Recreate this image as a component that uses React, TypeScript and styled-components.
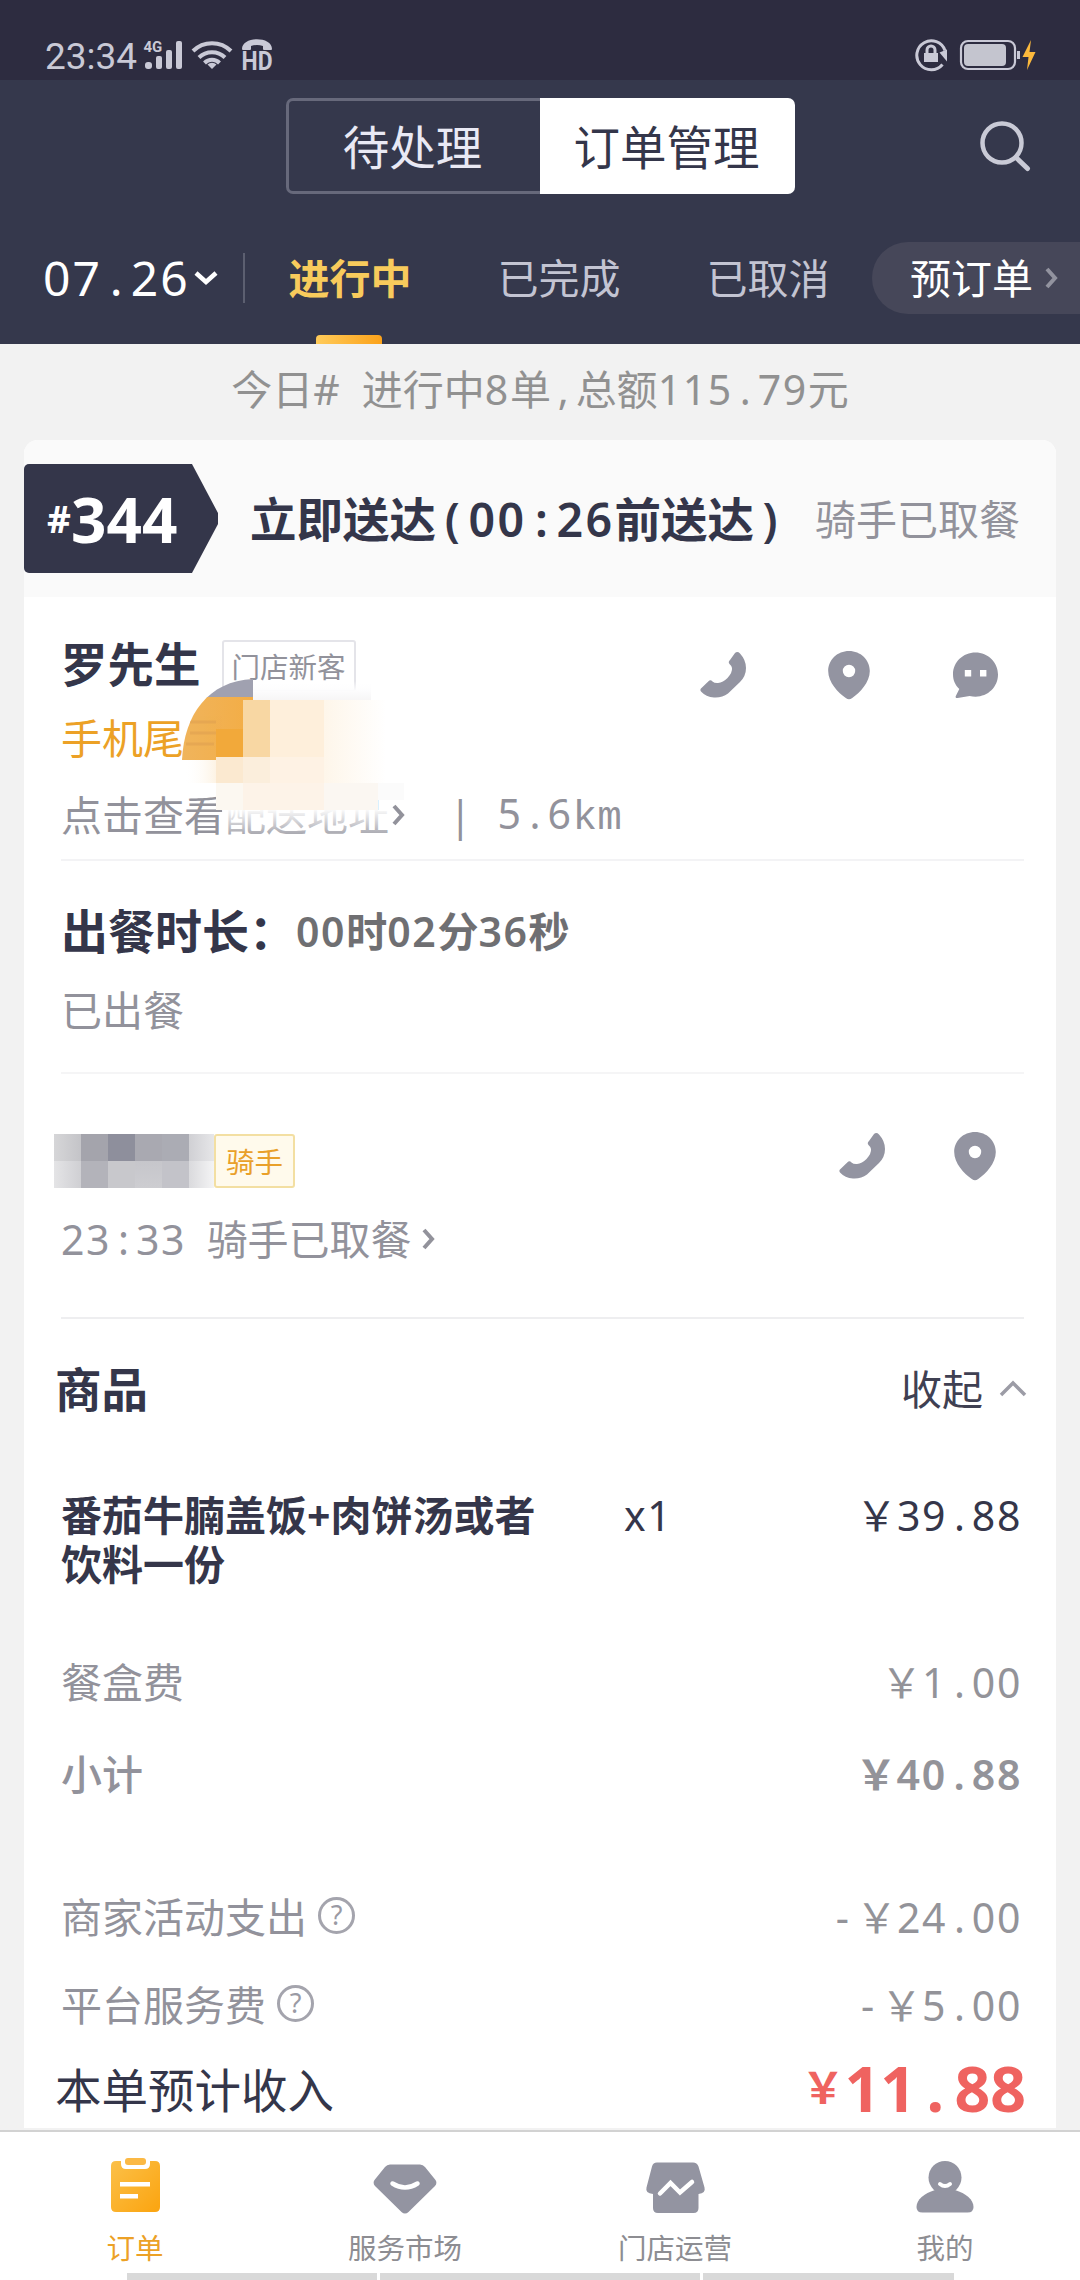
import React from "react";
import styled, { createGlobalStyle, css } from "styled-components";

const GlobalStyle = createGlobalStyle`
  * { box-sizing: border-box; }
  body { margin: 0; background: #f2f2f2; }
`;

const ink = "#34364a";
const gray = "#92929b";
const iconGray = "#9394a1";
const amber = "#eca126";

const Screen = styled.div`
  width: 1080px;
  height: 2280px;
  display: flex;
  flex-direction: column;
  overflow: hidden;
  background: #f2f2f2;
  color: ${ink};
  font-family: "Noto Sans", "Noto Sans CJK SC", sans-serif;
  font-size: 41px;
  line-height: 50px;
  white-space: nowrap;
`;

/* ---------- text ---------- */

const Digits = styled.span<{ $loose?: boolean }>`
  letter-spacing: ${(p) => (p.$loose ? 0.05 : 0.04)}em;
  word-spacing: 0.2em;
  white-space: pre;
`;
const Mark = styled.span<{ $loose?: boolean }>`
  letter-spacing: 0;
  padding: 0 ${(p) => (p.$loose ? 0.187 : 0.168)}em;
`;
const Wide = styled.span`
  letter-spacing: 0;
`;
const Unit = styled.span`
  font-family: "Liberation Mono", monospace;
  letter-spacing: 0;
`;

function Mono({ children, loose }: { children: string; loose?: boolean }) {
  const parts = children.split(/([.:,()-]|km|[^\x00-\x7f]+)/).filter(Boolean);
  return (
    <Digits $loose={loose}>
      {parts.map((p, i) =>
        /^[.:,()-]$/.test(p) ? (
          <Mark key={i} $loose={loose}>{p}</Mark>
        ) : p === "km" ? (
          <Unit key={i}>{p}</Unit>
        ) : /^[^\x00-\x7f]/.test(p) ? (
          <Wide key={i}>{p}</Wide>
        ) : (
          p
        )
      )}
    </Digits>
  );
}

type TextProps = {
  $size?: number;
  $color?: string;
  $weight?: number;
};
const Text = styled.span<TextProps>`
  font-size: ${(p) => p.$size ?? 41}px;
  color: ${(p) => p.$color ?? gray};
  font-weight: ${(p) => p.$weight ?? 400};
`;

/* ---------- status bar ---------- */

const StatusBar = styled.header`
  height: 80px;
  flex: none;
  display: flex;
  align-items: flex-start;
  justify-content: space-between;
  padding: 38px 44px 0 45px;
  background: #2d2c40;
  color: #c9c9d6;
`;
const StatusGroup = styled.div`
  display: flex;
  align-items: center;
  height: 34px;
`;
const Clock = styled.span`
  width: 98px;
  padding-top: 4px;
  font-family: Roboto, sans-serif;
  font-size: 37px;
  line-height: 34px;
`;
const StatusSvg = styled.svg`
  display: block;
  flex: none;
`;

/* ---------- header ---------- */

const Header = styled.div`
  height: 264px;
  flex: none;
  background: #35384c;
`;
const TitleBar = styled.div`
  height: 132px;
  display: grid;
  grid-template-columns: 286px 509px 1fr;
  align-items: start;
  padding-top: 18px;
`;
const Segments = styled.div`
  grid-column: 2;
  display: grid;
  grid-template-columns: 254px 255px;
  height: 96px;
`;
const Segment = styled.button<{ $active?: boolean }>`
  padding: 1px 4px 0 0;
  font: inherit;
  font-size: 46.5px;
  border: 3px solid #67697b;
  border-right: 0;
  border-radius: 7px 0 0 7px;
  background: transparent;
  color: #e9e9f4;
  ${(p) =>
    p.$active &&
    css`
      padding-right: 2px;
      border: 0;
      border-radius: 0 7px 7px 0;
      background: #fff;
      color: ${ink};
    `}
`;
const SearchButton = styled.div`
  padding: 20px 0 0 182px;
`;
const TabBar = styled.div`
  height: 132px;
  display: flex;
  align-items: center;
  padding-left: 43px;
`;
const DatePicker = styled.div`
  display: flex;
  align-items: center;
  width: 200px;
  color: #fff;
  font-size: 48px;
`;
const TabDivider = styled.div`
  width: 2px;
  height: 50px;
  margin-right: 23px;
  background: #5c5f70;
`;
const Tab = styled.div<{ $active?: boolean }>`
  position: relative;
  width: 164px;
  height: 132px;
  margin-right: 45px;
  text-align: center;
  line-height: 132px;
  color: ${(p) => (p.$active ? "#f8cb5c" : "#c3c4d2")};
  font-weight: ${(p) => (p.$active ? 700 : 400)};
  &:nth-last-child(2) {
    margin-right: 22px;
  }
`;
const TabMark = styled.i`
  position: absolute;
  left: 48px;
  bottom: 0;
  width: 66px;
  height: 9px;
  border-radius: 4px 4px 0 0;
  background: linear-gradient(90deg, #ffcb5a, #fba21b);
`;
const Preorder = styled.div`
  flex: 1;
  display: flex;
  align-items: center;
  gap: 12px;
  height: 72px;
  padding-left: 38px;
  border-radius: 36px 0 0 36px;
  background: #464759;
  color: #fff;
`;

/* ---------- order card ---------- */

const Summary = styled.div`
  height: 96px;
  flex: none;
  line-height: 90px;
  text-align: center;
  color: #919191;
`;
const Card = styled.section`
  height: 1688px;
  flex: none;
  margin: 0 24px;
  border-radius: 14px 14px 0 0;
  background: #fff;
`;
const CardHead = styled.div`
  height: 157px;
  display: flex;
  align-items: center;
  border-radius: 14px 14px 0 0;
  background: #fafafa;
`;
const OrderNo = styled.div`
  display: flex;
  align-items: center;
  width: 194px;
  height: 109px;
  padding-left: 23px;
  background: ${ink};
  border-radius: 5px 0 0 5px;
  clip-path: polygon(0 0, 168px 0, 194px 45%, 194px 55%, 168px 100%, 0 100%);
  color: #fff;
  font-weight: 700;
  font-size: 62px;
`;
const Hash = styled.span`
  width: 24px;
  font-size: 37px;
`;
const Deadline = styled.div`
  width: 567px;
  padding-left: 32px;
  font-size: 46.5px;
  font-weight: 600;
`;

const Section = styled.div<{ $bottom: number; $line: string }>`
  margin: 0 32px 0 37px;
  padding-bottom: ${(p) => p.$bottom}px;
  border-bottom: 2px solid ${(p) => p.$line};
  position: relative;
`;
const Goods = styled.div`
  margin: 0 29px 0 37px;
`;
const Row = styled.div<{ $top: number; $h?: number; $outdent?: number }>`
  display: flex;
  align-items: center;
  height: ${(p) => p.$h ?? 50}px;
  margin: ${(p) => p.$top}px 0 0 ${(p) => -(p.$outdent ?? 0)}px;
`;
const Spacer = styled.div<{ $w?: number }>`
  ${(p) => (p.$w ? `width: ${p.$w}px; flex: none;` : "flex: 1;")}
`;
const Flow = styled.div`
  display: flow-root;
`;
const Tag = styled.span<{ $gold?: boolean }>`
  display: flex;
  align-items: center;
  justify-content: center;
  font-size: 28.5px;
  margin-top: ${(p) => (p.$gold ? 0 : 4)}px;
  padding-top: 2px;
  width: ${(p) => (p.$gold ? 81 : 134)}px;
  height: ${(p) => (p.$gold ? 54 : 52)}px;
  border: 2px solid ${(p) => (p.$gold ? "#f3dfa2" : "#e4e4e9")};
  border-radius: 3px;
  background: ${(p) => (p.$gold ? "#fffaec" : "#fff")};
  color: ${(p) => (p.$gold ? "#e9a02a" : gray)};
`;
const Actions = styled.div<{ $gap: number; $right: number; $top?: number; $bottom?: number }>`
  display: flex;
  align-items: center;
  margin-left: auto;
  gap: ${(p) => p.$gap}px;
  padding: ${(p) => p.$top ?? 0}px ${(p) => p.$right}px ${(p) => p.$bottom ?? 0}px 0;
`;
const Smudge = styled.svg`
  position: absolute;
  left: 115px;
  top: 73px;
  pointer-events: none;
`;
const ItemRow = styled.div`
  display: grid;
  grid-template-columns: 563px 1fr auto;
  align-items: start;
  margin-top: 77px;
  padding-right: 5px;
  line-height: 49px;
  color: #35364a;
`;
const ItemName = styled.div`
  width: 490px;
  font-weight: 700;
  white-space: normal;
`;
const Amount = styled.span<{ $weight?: number }>`
  margin-left: auto;
  padding-right: 5px;
  color: #939399;
  font-weight: ${(p) => p.$weight ?? 400};
`;
const Total = styled.div`
  margin-left: auto;
  display: flex;
  align-items: center;
  padding: 0 1px 5px 0;
  font-size: 62.5px;
  font-weight: 700;
  line-height: 60px;
  color: #ef6360;
`;
const Currency = styled.span`
  font-size: 43px;
`;

/* ---------- bottom navigation ---------- */

const Nav = styled.nav`
  margin-top: 2px;
  height: 150px;
  flex: none;
  display: flex;
  flex-direction: column;
  border-top: 2px solid #d2d2d2;
  background: #fff;
`;
const NavItems = styled.div`
  display: grid;
  grid-template-columns: repeat(4, 270px);
  height: 141px;
`;
const NavItem = styled.div<{ $active?: boolean }>`
  display: flex;
  flex-direction: column;
  align-items: center;
  padding-top: 22px;
  font-size: 28.5px;
  line-height: 32px;
  color: ${(p) => (p.$active ? amber : "#8d8d92")};
  svg {
    margin-bottom: 18px;
  }
`;
const Handle = styled.div`
  display: grid;
  grid-template-columns: 250px 320px 251px;
  gap: 3px;
  margin-left: 127px;
  height: 7px;
`;
const HandlePart = styled.i`
  background: #d9d9d9;
`;

/* ---------- icons ---------- */

const Phone = () => (
  <svg width="48" height="48" viewBox="-1 0 48 48" fill={iconGray}>
    <path d="M35 2Q37.500 0 40 2.500 46 9 46 17 46 25 40 31L28 42.500Q22 47 14 46.500 6 46 1 40.500 -.5 38.500 1.500 37L8.500 30.200Q10.500 28.300 12.500 30.500 14.500 32.300 18 32 23 31.500 27.500 27 32.500 21.500 32 17 31.800 15 29.500 13 27.800 11 30 9Z" />
  </svg>
);
const Pin = () => (
  <svg width="44" height="50" viewBox="0 0 44 50" fill={iconGray}>
    <path
      fillRule="evenodd"
      d="M22 1C10.400 1 1.200 9.800 1.200 21c0 11.500 10 21.700 17.600 27 2.200 1.600 4.200 1.600 6.400 0C32.800 42.700 42.800 32.500 42.800 21 42.800 9.800 33.600 1 22 1zm0 13.800a6.200 6.200 0 1 1 0 12.400 6.200 6.200 0 0 1 0-12.400z"
    />
  </svg>
);
const Chat = () => (
  <svg width="48" height="48" viewBox="0 0 48 48" fill={iconGray}>
    <path
      fillRule="evenodd"
      d="M24.500 1.500C12 1.500 2 11 2 23.200c0 6.200 2.300 11 6.300 14.800L4.800 45c-.7 1.500.3 2.300 1.800 2l12-2c2 .5 4 .7 6 .7C37 45.700 47 36 47 23.600S37 1.500 24.500 1.500zM13.800 19h6.400v6.400h-6.400zm15.200 0h6.400v6.400H29z"
    />
  </svg>
);
type ChevronProps = { w: number; h: number; d: string; color: string; sw?: number };
const Chevron = ({ w, h, d, color, sw = 4 }: ChevronProps) => (
  <svg width={w} height={h} viewBox={`0 0 ${w} ${h}`} fill="none" stroke={color} strokeWidth={sw}>
    <path d={d} />
  </svg>
);
const HelpMark = styled.span`
  display: flex;
  align-items: center;
  justify-content: center;
  width: 37px;
  height: 37px;
  margin: 0 0 4px 11px;
  border: 3px solid #a4a4ad;
  border-radius: 50%;
  font-size: 27px;
  line-height: 30px;
  color: #9a9aa4;
`;

const NameMosaic = () => (
  <Smudge width="240" height="170" viewBox="176 670 240 170">
    <defs>
      <linearGradient id="mFade" x1="0" x2="0" y1="0" y2="1">
        <stop offset="0" stopColor="#fff" stopOpacity=".95" />
        <stop offset="1" stopColor="#fff" stopOpacity=".1" />
      </linearGradient>
      <linearGradient id="mRight" x1="0" x2="1" y1="0" y2="0">
        <stop offset="0" stopColor="#fef6ea" />
        <stop offset="1" stopColor="#fff" />
      </linearGradient>
      <linearGradient id="mOrange" x1="0" x2="1" y1="0" y2="0">
        <stop offset="0" stopColor="#f0b45c" />
        <stop offset="1" stopColor="#f3ad45" />
      </linearGradient>
      <linearGradient id="mTag" x1="0" x2="0" y1="0" y2="1">
        <stop offset="0" stopColor="#fff" stopOpacity="0" />
        <stop offset=".5" stopColor="#fcfcfd" />
        <stop offset="1" stopColor="#f6f5f5" />
      </linearGradient>
      <linearGradient id="mLow" x1="0" x2="1" y1="0" y2="0">
        <stop offset="0" stopColor="#fff" stopOpacity="0" />
        <stop offset="1" stopColor="#fdf3e4" />
      </linearGradient>
      <clipPath id="mDome">
        <path d="M182 760C184 715 208 681 253 679V760z" />
      </clipPath>
    </defs>
    <g clipPath="url(#mDome)">
      <rect x="182" y="678" width="71" height="20" fill="#a0a1b0" />
      <rect x="182" y="697" width="71" height="63" fill="url(#mOrange)" />
      <path d="M190 722h26M190 733h26M186 744h28" stroke="#e0a050" strokeWidth="3" opacity=".6" />
    </g>
    <rect x="253" y="681" width="118" height="20" fill="url(#mTag)" />
    <rect x="216" y="729" width="27" height="30" fill="#f2a93a" />
    <rect x="243" y="700" width="27" height="57" fill="#f8d7a3" />
    <rect x="270" y="700" width="54" height="57" fill="#feefdb" />
    <rect x="324" y="700" width="62" height="57" fill="url(#mRight)" />
    <rect x="184" y="760" width="32" height="23" fill="url(#mLow)" />
    <rect x="216" y="757" width="27" height="26" fill="#fbe9d0" />
    <rect x="243" y="757" width="27" height="26" fill="#fbeedc" />
    <rect x="270" y="757" width="54" height="26" fill="#fef2e4" />
    <rect x="324" y="757" width="62" height="26" fill="url(#mRight)" />
    <rect x="216" y="783" width="27" height="27" fill="#fcf8f1" />
    <rect x="243" y="783" width="81" height="27" fill="#fdf3e8" />
    <rect x="324" y="783" width="54" height="27" fill="#fbf7f2" />
    <rect x="378" y="783" width="26" height="17" fill="#fbfbfb" />
    <rect x="222" y="810" width="168" height="28" fill="url(#mFade)" />
  </Smudge>
);

const RiderMosaic = styled.div`
  display: grid;
  grid-template-columns: repeat(6, 27px);
  grid-template-rows: 27px 27px;
  width: 160px;
  overflow: hidden;
`;
const Cell = styled.i<{ $c: string }>`
  background: ${(p) => p.$c};
`;
const riderCells = [
  "linear-gradient(90deg,#d6d6d8,#c4c4c8)",
  "#a4a4ac",
  "#8e8f9c",
  "#a9a9b1",
  "#abacb4",
  "linear-gradient(90deg,#d0d0d4,#e8e8ea)",
  "linear-gradient(90deg,#e4e4e6,#cfcfd3)",
  "#b3b3ba",
  "#c8c8cc",
  "linear-gradient(180deg,#c6c6cb,#cdcdd1)",
  "#c3c3c9",
  "linear-gradient(90deg,#dadadd,#f6f6f7)",
];

export default function App() {
  return (
    <Screen>
      <GlobalStyle />
      <StatusBar>
        <StatusGroup>
          <Clock>23:34</Clock>
          <StatusSvg width="140" height="50" viewBox="143 30 140 50" fill="#c9c9d6">
            <text x="143.500" y="52" fontFamily="Roboto" fontWeight="700" fontSize="15">4G</text>
            <rect x="145" y="62" width="7" height="7" rx="3" />
            <rect x="156" y="56" width="6" height="13" rx="2" />
            <rect x="166" y="50" width="6" height="19" rx="2" />
            <rect x="176" y="41" width="6" height="28" rx="2" />
            <g fill="none" stroke="#c9c9d6" strokeWidth="4">
              <path d="M193 51a27 27 0 0 1 38 0" />
              <path d="M199 57.500a18.500 18.500 0 0 1 26 0" />
              <path d="M204.500 63a10.500 10.500 0 0 1 15 0" />
            </g>
            <path d="M212 69l-4.500-4.500a6.500 6.500 0 0 1 9 0z" />
            <path d="M242 49c0-13 30-13 30 0q0 1-1 1h-7q-1 0-1-1v-3q-6-2-12 0v3q0 1-1 1h-7q-1 0-1-1z" />
            <text x="241.500" y="70" fontFamily="Roboto" fontWeight="700" fontSize="26" textLength="31" lengthAdjust="spacingAndGlyphs">HD</text>
          </StatusSvg>
        </StatusGroup>
        <StatusGroup>
          <StatusSvg width="122" height="34" viewBox="914 38 122 34" fill="none">
            <path d="M942.500 64.500a14.500 14.500 0 1 1 2.500-14" stroke="#c9c9d6" strokeWidth="3" />
            <path d="M939.500 52.500l7.500 9v-12z" fill="#c9c9d6" />
            <rect x="924" y="53" width="14" height="9" fill="#c9c9d6" />
            <path d="M927 54v-4a4 4 0 0 1 8 0v4" stroke="#c9c9d6" strokeWidth="3" />
            <rect x="961" y="41" width="54" height="28" rx="7" stroke="#c9c9d6" strokeWidth="2.200" />
            <rect x="964" y="44" width="42" height="22" rx="4" fill="#c4c5cf" />
            <rect x="1017" y="51" width="3" height="8" fill="#c9c9d6" />
            <path d="M1031 40l-8.500 17h6l-1.500 13 8.500-18h-6z" fill="#fcb93c" />
          </StatusSvg>
        </StatusGroup>
      </StatusBar>

      <Header>
        <TitleBar>
          <Segments>
            <Segment>待处理</Segment>
            <Segment $active>订单管理</Segment>
          </Segments>
          <SearchButton>
            <svg width="56" height="56" viewBox="0 0 56 56" fill="none" stroke="#c9cad6" strokeWidth="4.500">
              <circle cx="25" cy="25" r="19.500" />
              <path d="M39 39.500l11.500 11" strokeWidth="5" strokeLinecap="round" />
            </svg>
          </SearchButton>
        </TitleBar>
        <TabBar>
          <DatePicker>
            <Mono>07.26</Mono>
            <Spacer $w={3} />
            <Chevron w={26} h={18} d="M3 4l10 9 10-9" color="#fff" sw={4.5} />
          </DatePicker>
          <TabDivider />
          <Tab $active>
            进行中
            <TabMark />
          </Tab>
          <Tab>已完成</Tab>
          <Tab>已取消</Tab>
          <Preorder>
            预订单
            <Chevron w={14} h={24} d="M2 3l8 9-8 9" color="#92939f" />
          </Preorder>
        </TabBar>
      </Header>

      <Summary>
        <Mono>今日# 进行中8单,总额115.79元</Mono>
      </Summary>

      <Card>
        <CardHead>
          <OrderNo>
            <Hash>#</Hash>344
          </OrderNo>
          <Deadline>
            <Mono loose>立即送达(00:26前送达)</Mono>
          </Deadline>
          <Spacer $w={30} />
          <Text>骑手已取餐</Text>
        </CardHead>

        <Section $bottom={19} $line="#f3f3f5">
          <Flow>
            <Row $top={39} $h={56}>
              <Text $size={46.5} $color={ink} $weight={700}>罗先生</Text>
              <Spacer $w={21} />
              <Tag>门店新客</Tag>
              <Actions $gap={80} $right={25} $top={22}>
                <Phone />
                <Pin />
                <Chat />
              </Actions>
            </Row>
            <Row $top={21}>
              <Text $color={amber}>手机尾号</Text>
            </Row>
            <Row $top={27}>
              <Text>点击查看配送地址</Text>
              <Spacer $w={3} />
              <Chevron w={14} h={22} d="M2 2l8 9-8 9" color={gray} />
              <Spacer $w={43} />
              <Text>|</Text>
              <Spacer $w={26} />
              <Text><Mono>5.6km</Mono></Text>
            </Row>
            <NameMosaic />
          </Flow>
        </Section>

        <Section $bottom={37} $line="#f5f5f6">
          <Flow>
            <Row $top={45}>
              <Text $size={47} $color={ink} $weight={700}>出餐时长{"\uFF1A"}</Text>
              <Text $color="#6f6f72" $weight={600}><Mono>00时02分36秒</Mono></Text>
            </Row>
            <Row $top={29}>
              <Text>已出餐</Text>
            </Row>
          </Flow>
        </Section>

        <Section $bottom={53} $line="#eeeef0">
          <Flow>
            <Row $top={60} $h={54} $outdent={7}>
              <RiderMosaic>
                {riderCells.map((c, i) => (
                  <Cell key={i} $c={c} />
                ))}
              </RiderMosaic>
              <Tag $gold>骑手</Tag>
              <Actions $gap={67} $right={27} $bottom={11}>
                <Phone />
                <Pin />
              </Actions>
            </Row>
            <Row $top={26}>
              <Text><Mono>23:33 骑手已取餐</Mono></Text>
              <Spacer $w={10} />
              <Chevron w={14} h={22} d="M2 2l8 9-8 9" color={gray} />
            </Row>
          </Flow>
        </Section>

        <Goods>
          <Flow>
            <Row $top={45} $outdent={6}>
              <Text $size={46.5} $color={ink} $weight={700}>商品</Text>
              <Spacer />
              <Text $color="#3f4052">收起</Text>
              <Spacer $w={16} />
              <Chevron w={28} h={18} d="M2 15l12-12 12 12" color="#9c9ca6" sw={3.5} />
            </Row>
            <ItemRow>
              <ItemName>番茄牛腩盖饭+肉饼汤或者饮料一份</ItemName>
              <Mono>x1</Mono>
              <Mono>{"\uFFE539.88"}</Mono>
            </ItemRow>
            <Row $top={68}>
              <Text>餐盒费</Text>
              <Amount><Mono>{"\uFFE51.00"}</Mono></Amount>
            </Row>
            <Row $top={42}>
              <Text $weight={500}>小计</Text>
              <Amount $weight={600}><Mono>{"\uFFE540.88"}</Mono></Amount>
            </Row>
            <Row $top={93}>
              <Text>商家活动支出</Text>
              <HelpMark>?</HelpMark>
              <Amount><Mono>{"-\uFFE524.00"}</Mono></Amount>
            </Row>
            <Row $top={38}>
              <Text>平台服务费</Text>
              <HelpMark>?</HelpMark>
              <Amount><Mono>{"-\uFFE55.00"}</Mono></Amount>
            </Row>
            <Row $top={30} $h={60} $outdent={6}>
              <Text $size={46.5} $color={ink}>本单预计收入</Text>
              <Total>
                <Currency>{"\uFFE5"}</Currency>
                <span>11<Mark>.</Mark>88</span>
              </Total>
            </Row>
          </Flow>
        </Goods>
      </Card>

      <Nav>
        <NavItems>
          <NavItem $active>
            <svg width="64" height="60" viewBox="0 0 64 60">
              <defs>
                <linearGradient id="clip" x1="0" y1="0" x2="1" y2="1">
                  <stop offset="0" stopColor="#fbc049" />
                  <stop offset="1" stopColor="#fba40f" />
                </linearGradient>
              </defs>
              <path d="M13 7h5v3q0 5 5 5h19q5 0 5-5V7h5q5 0 5 5v41q0 5-5 5H13q-5 0-5-5V12q0-5 5-5z" fill="url(#clip)" />
              <rect x="22" y="4" width="21" height="7" rx="3" fill="#fbb945" />
              <rect x="17" y="28" width="30" height="4.500" fill="#fff" />
              <rect x="17" y="40" width="18" height="4.500" fill="#fff" />
            </svg>
            订单
          </NavItem>
          <NavItem>
            <svg width="64" height="60" viewBox="0 0 64 60">
              <path d="M17 10.500h30q3 0 5 2.500l10.500 13q2 3-.5 6L35.500 58q-3.500 3-7 0L2 32q-2.500-3-.5-6L12 13q2-2.500 5-2.500z" fill={iconGray} />
              <path d="M19.500 29.500q12.500 8 25 0" fill="none" stroke="#fff" strokeWidth="4.500" strokeLinecap="round" />
            </svg>
            服务市场
          </NavItem>
          <NavItem>
            <svg width="64" height="60" viewBox="0 0 64 60" fill={iconGray}>
              <path d="M14 8.500h36q4 0 5.500 4l6 21q1.500 5.500-6 6.500v14q0 5-5 5H15q-5 0-5-5V40q-8-1-6.500-6.500l5.500-21q1-4 5-4z" />
              <path d="M17 39.500L27.500 29l9.500 9.500 12-10.500" fill="none" stroke="#fff" strokeWidth="4.500" strokeLinecap="round" strokeLinejoin="miter" />
            </svg>
            门店运营
          </NavItem>
          <NavItem>
            <svg width="64" height="60" viewBox="0 0 64 60" fill={iconGray}>
              <circle cx="32" cy="23.500" r="16.500" />
              <path d="M22 36h20C53 39.500 60.500 45.500 60.500 53q0 5.500-6 5.500h-45q-6 0-6-5.500C3.500 45.500 11 39.500 22 36z" />
              <path d="M27 30q5 4 10 0" fill="none" stroke="#fff" strokeWidth="4" strokeLinecap="round" />
            </svg>
            我的
          </NavItem>
        </NavItems>
        <Handle>
          <HandlePart />
          <HandlePart />
          <HandlePart />
        </Handle>
      </Nav>
    </Screen>
  );
}
